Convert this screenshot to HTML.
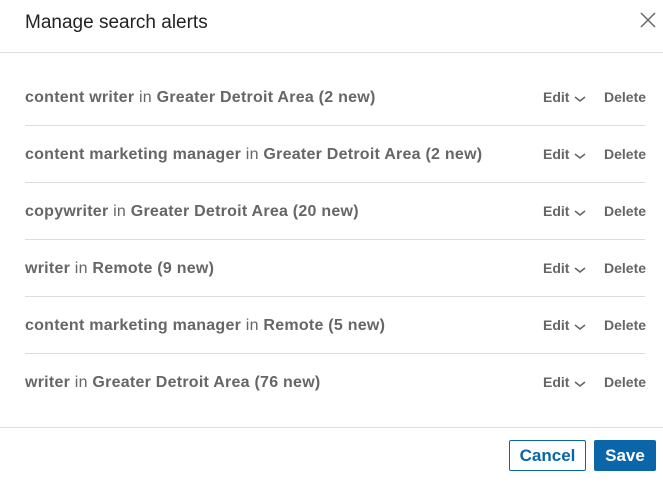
<!DOCTYPE html>
<html><head><style>
body{margin:0;width:663px;height:486px;background:#fff;font-family:"Liberation Sans",sans-serif;position:relative;overflow:hidden}
.t{position:absolute;left:25px;top:12px;font-size:19px;color:#222}
.x{position:absolute;left:640px;top:12px}
.hl{position:absolute;left:0;width:663px;top:52px;border-top:1px solid #ddd}
.row{position:absolute;left:25px;width:620px;height:57px;font-size:16px;color:#666;letter-spacing:0.25px}
.row .l{position:absolute;top:0;line-height:57px;font-weight:bold}
.row .l span{font-weight:normal}
.row .e{position:absolute;left:518px;line-height:57px;font-size:14px;font-weight:bold;color:#666;letter-spacing:0}
.row .c{position:absolute;left:549px;top:27px}
.row .d{position:absolute;left:579px;line-height:57px;font-size:14px;font-weight:bold;letter-spacing:0}
.sep{position:absolute;left:25px;width:620px;border-top:1px solid #ddd}
.fl{position:absolute;left:0;width:663px;top:427px;border-top:1px solid #ddd}
.btn{position:absolute;top:440px;height:31px;box-sizing:border-box;border-radius:2px;font-size:17px;font-weight:bold;text-align:center;line-height:29px}
</style></head><body>
<div class="t">Manage search alerts</div>
<svg class="x" width="16" height="16" viewBox="0 0 16 16"><path d="M1 1L15 15M15 1L1 15" stroke="#666" stroke-width="1.5"/></svg>
<div class="hl"></div>

<div class="row" style="top:69px"><div class="l">content writer <span>in</span> Greater Detroit Area (2 new)</div><div class="e">Edit</div><svg class="c" width="12" height="7"><path d="M1 1L6 5L11 1" stroke="#666" stroke-width="1.6" fill="none"/></svg><div class="d">Delete</div></div>
<div class="sep" style="top:125px"></div>
<div class="row" style="top:126px"><div class="l">content marketing manager <span>in</span> Greater Detroit Area (2 new)</div><div class="e">Edit</div><svg class="c" width="12" height="7"><path d="M1 1L6 5L11 1" stroke="#666" stroke-width="1.6" fill="none"/></svg><div class="d">Delete</div></div>
<div class="sep" style="top:182px"></div>
<div class="row" style="top:183px"><div class="l">copywriter <span>in</span> Greater Detroit Area (20 new)</div><div class="e">Edit</div><svg class="c" width="12" height="7"><path d="M1 1L6 5L11 1" stroke="#666" stroke-width="1.6" fill="none"/></svg><div class="d">Delete</div></div>
<div class="sep" style="top:239px"></div>
<div class="row" style="top:240px"><div class="l">writer <span>in</span> Remote (9 new)</div><div class="e">Edit</div><svg class="c" width="12" height="7"><path d="M1 1L6 5L11 1" stroke="#666" stroke-width="1.6" fill="none"/></svg><div class="d">Delete</div></div>
<div class="sep" style="top:296px"></div>
<div class="row" style="top:297px"><div class="l">content marketing manager <span>in</span> Remote (5 new)</div><div class="e">Edit</div><svg class="c" width="12" height="7"><path d="M1 1L6 5L11 1" stroke="#666" stroke-width="1.6" fill="none"/></svg><div class="d">Delete</div></div>
<div class="sep" style="top:353px"></div>
<div class="row" style="top:354px"><div class="l">writer <span>in</span> Greater Detroit Area (76 new)</div><div class="e">Edit</div><svg class="c" width="12" height="7"><path d="M1 1L6 5L11 1" stroke="#666" stroke-width="1.6" fill="none"/></svg><div class="d">Delete</div></div>

<div class="fl"></div>
<div class="btn" style="left:509px;width:77px;border:1px solid #0a66a8;color:#0a66a8;background:#fff">Cancel</div>
<div class="btn" style="left:594px;width:62px;background:#0a66a8;color:#fff;line-height:31px">Save</div>
</body></html>
